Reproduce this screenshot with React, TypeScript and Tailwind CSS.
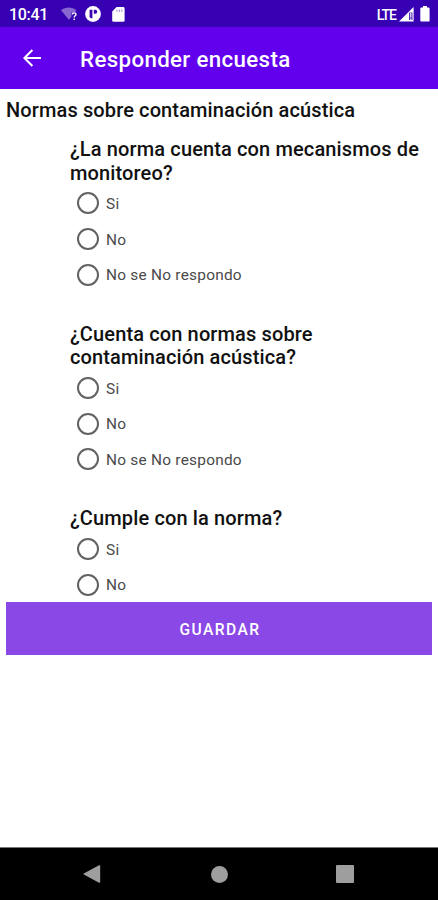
const questions = [
  { title: ['¿La norma cuenta con mecanismos de', 'monitoreo?'], options: ['Si', 'No', 'No se No respondo'] },
  { title: ['¿Cuenta con normas sobre', 'contaminación acústica?'], options: ['Si', 'No', 'No se No respondo'] },
  { title: ['¿Cumple con la norma?'], options: ['Si', 'No'] },
];

function StatusBar() {
  return (
    <div className="h-[27px] shrink-0 bg-[#3700b3] flex items-center justify-between pl-[9px] pr-[8px] pt-px text-white">
      <div className="flex items-center">
        <span className="w-[51px] pt-px text-[16px] leading-none font-medium tracking-[-0.3px]">10:41</span>
        {/* Wifi without internet */}
        <svg width="17" height="14" viewBox="0 0 17 14" className="ml-px">
          <path d="M0 3.2C4.4-.4 11.2-.4 15.4 3.2L13.6 5.4H10.4V10L7.8 12.8Z" fill="#fff" fillOpacity="0.4" />
          <path d="M11.4 7.4C11.4 5.3 15 5.3 15 7.4C15 8.8 13.2 8.8 13.2 10.4M13.2 11.4V13" fill="none" stroke="#fff" strokeWidth="1.4" />
        </svg>
        <svg width="16" height="16" viewBox="0 0 16 16" className="ml-[7px]">
          <circle cx="8" cy="8" r="7.9" fill="#fff" />
          <path d="M4.6 3.7H7.4V12.2H6.2Q4.6 12.2 4.6 10.6Z" fill="#3700b3" />
          <path d="M8.8 3.7H10.2A2 2 0 0 1 10.2 7.7H8.8Z" fill="#3700b3" />
        </svg>
        <svg width="13" height="15" viewBox="0 0 13 15" className="ml-[11px]">
          <path d="M4.6 0H11.2Q12.6 0 12.6 1.4V13.4Q12.6 14.8 11.2 14.8H1.6Q.2 14.8 .2 13.4V4.6Z" fill="#fff" />
          <path d="M5 2.6V4.8M7.4 2.6V4.8M9.8 2.6V4.8" stroke="#3700b3" strokeOpacity="0.5" strokeWidth="1" />
        </svg>
      </div>
      <div className="flex items-center">
        <span className="pt-px text-[14px] leading-none font-medium tracking-[-1px]">LTE</span>
        <svg width="15" height="15" viewBox="0 0 15 15" className="ml-[3px]">
          <path d="M0 14.5L14.6 0V14.5Z" fill="#fff" />
          <path d="M10 5.5H13.5V13H10Z" fill="#3700b3" fillOpacity="0.85" />
          <path d="M11.8 6V10.4M11.8 11.4V13" stroke="#fff" strokeWidth="1.1" />
        </svg>
        <svg width="10" height="16" viewBox="0 0 10 16" className="ml-[6px]">
          <path d="M3 0H7V1.6H8.4Q9.6 1.6 9.6 2.8V14.4Q9.6 15.6 8.4 15.6H1.5Q.3 15.6 .3 14.4V2.8Q.3 1.6 1.5 1.6H3Z" fill="#fff" />
        </svg>
      </div>
    </div>
  );
}

function NavigationBar() {
  return (
    <nav className="h-[53px] shrink-0 bg-black border-t border-[#777] flex items-center justify-between pl-[83px] pr-[84px]">
      <svg width="18" height="18" viewBox="0 0 18 18" fill="#9e9e9e">
        <path d="M.8 8.4Q0 9 .8 9.6L16 17.8Q17.2 18 17.2 17V1Q17.2 0 16 .2Z" />
      </svg>
      <div className="ml-px size-[17px] rounded-full bg-[#9e9e9e]" />
      <div className="size-[18px] rounded-[1px] bg-[#9e9e9e]" />
    </nav>
  );
}

export default function App() {
  return (
    <div className="w-[438px] h-[900px] overflow-hidden flex flex-col bg-white font-['Roboto',sans-serif]">
      <StatusBar />
      <header className="h-[62px] shrink-0 bg-[#6200ee] flex items-center pl-[23px] text-white">
        <svg width="18" height="18" viewBox="0 0 18 18" fill="none" stroke="#fff" strokeWidth="2.1">
          <path d="M18 9H2M9.4 .9L1.4 9L9.4 17.1" />
        </svg>
        <h1 className="ml-[39px] pt-[3px] text-[22.3px] leading-none font-medium tracking-[0.35px] whitespace-nowrap">Responder encuesta</h1>
      </header>

      <main className="flex-1 flex flex-col px-[6px] pt-[9px] text-[#111]">
        <h2 className="text-[20px] leading-[24px] font-medium tracking-[0.12px] whitespace-nowrap">Normas sobre contaminación acústica</h2>

        <div className="h-[480px] overflow-hidden pl-[64px] pt-4 flex flex-col gap-[30.2px]">
          {questions.map(question => (
            <section key={question.title[0]}>
              <h3 className="text-[20px] leading-[23.7px] font-medium tracking-[0.13px] whitespace-nowrap">
                {question.title.map(line => (
                  <span key={line} className="block">{line}</span>
                ))}
              </h3>
              {question.options.map(option => (
                <label key={option} className="h-[35.7px] flex items-center pl-[7px]">
                  <span className="size-[22px] rounded-full border-2 border-[#626262]" />
                  <span className="ml-[7px] pt-[3px] text-[15.4px] leading-none tracking-[0.25px] text-[#4a4a4a]">{option}</span>
                </label>
              ))}
            </section>
          ))}
        </div>

        <button className="h-[53px] pt-[4px] pl-[2px] bg-[#8a48e6] text-[15.6px] font-medium tracking-[1.4px] text-white">GUARDAR</button>
      </main>

      <NavigationBar />
    </div>
  );
}
